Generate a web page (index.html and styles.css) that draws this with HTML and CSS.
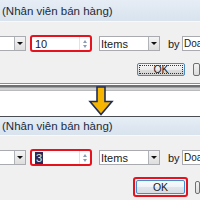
FILE: index.html
```html
<!DOCTYPE html>
<html>
<head>
<meta charset="utf-8">
<link rel="stylesheet" href="styles.css">
</head>
<body>
<div class="panel top">
  <div class="title">(Nhân viên bán hàng)</div>
  <div class="body">
    <div class="row">
      <div class="combo first"><span class="btn"><span class="tri"></span></span></div>
      <div class="spin hl"><span class="val">10</span><span class="arrows"><span class="up"></span><span class="down"></span></span></div>
      <div class="combo items"><span class="txt">Items</span><span class="btn"><span class="tri"></span></span></div>
      <span class="by">by</span>
      <div class="combo doan"><span class="txt">Doan</span></div>
    </div>
    <div class="btnrow">
      <div class="okwrap"><div class="ok focus">OK</div></div>
      <div class="ok other"></div>
    </div>
  </div>
</div>
<div class="sep">
  <div class="line blue"></div>
  <div class="line white1"></div>
  <div class="line dark"></div>
  <div class="line mid"></div>
  <div class="line light"></div>
  <div class="line mid2"></div>
  <div class="gap"></div>
  <div class="line dark2"></div>
  <svg class="arrow" width="26" height="30" viewBox="0 0 26 30">
    <path d="M9 1 H17 V15.5 H24 L13 28.5 L2 15.5 H9 Z" fill="#f6b500" stroke="#1f2d5a" stroke-width="1.6" stroke-linejoin="miter"/>
  </svg>
</div>
<div class="panel bottom">
  <div class="title">(Nhân viên bán hàng)</div>
  <div class="body">
    <div class="row">
      <div class="combo first"><span class="btn"><span class="tri"></span></span></div>
      <div class="spin hl"><span class="val"><span class="cur">3</span></span><span class="arrows"><span class="up"></span><span class="down"></span></span></div>
      <div class="combo items"><span class="txt">Items</span><span class="btn"><span class="tri"></span></span></div>
      <span class="by">by</span>
      <div class="combo doan"><span class="txt">Doan</span></div>
    </div>
    <div class="btnrow">
      <div class="okwrap red"><div class="ok">OK</div></div>
      <div class="ok other"></div>
    </div>
  </div>
</div>
</body>
</html>
```
FILE: styles.css
```css
* { box-sizing: border-box; }
html, body { margin: 0; padding: 0; }
body {
  width: 200px; height: 200px; overflow: hidden;
  font-family: "Liberation Sans", "DejaVu Sans", sans-serif;
  font-size: 11px; color: #1a1a1a; background: #fff;
}
.panel { background: #f0f0f0; overflow: hidden; position: relative; }
.top { height: 83px; }
.bottom { height: 83px; }
.title {
  height: 22px; line-height: 22px; padding-left: 2px;
  background: linear-gradient(#e6edf5, #d8e3ee);
  border-bottom: 1px solid #f7f9fb;
  color: #1e2b3a; white-space: nowrap; font-size: 11.5px;
}
.bottom .title { height: 19px; line-height: 18px; }
.body { padding-top: 13px; }
.bottom .body { padding-top: 13px; }
.row { display: flex; align-items: center; height: 17px; }
.row > * { flex-shrink: 0; }
.combo {
  height: 15px; background: #fff; border: 1px solid #a9abb0;
  display: flex; align-items: center; position: relative;
}
.combo.first { width: 27px; margin-left: -1px; border-left: none; justify-content: flex-end; }
.btn {
  width: 11px; height: 13px; border-left: 1px solid #b0b3b8;
  background: linear-gradient(#f4f4f4, #dedede);
  display: flex; align-items: center; justify-content: center;
}
.items .btn { position: absolute; right: 0; top: 0; }
.tri { width: 0; height: 0; border-left: 3px solid transparent; border-right: 3px solid transparent; border-top: 3px solid #111; }
.spin {
  margin-left: 4px; width: 62px; height: 17px;
  display: flex; align-items: center; justify-content: space-between;
  background: #fff;
}
.spin.hl { border: 2px solid #e5131d; border-radius: 3px; }
.val { padding-left: 3px; font-size: 11px; }
.cur { background: #2a2a5a; color: #e8e8d0; padding: 0 1px; }
.arrows { width: 10px; height: 13px; margin-right: 1px; display: flex; flex-direction: column; justify-content: center; gap: 2px; align-items: center; border-left: 1px solid #dfe3ea; }
.up { width: 0; height: 0; border-left: 2.5px solid transparent; border-right: 2.5px solid transparent; border-bottom: 3px solid #8a9cb6; }
.down { width: 0; height: 0; border-left: 2.5px solid transparent; border-right: 2.5px solid transparent; border-top: 3px solid #8a9cb6; }
.combo.items { margin-left: 7px; width: 61px; }
.txt { padding-left: 1px; font-size: 11px; }
.by { margin-left: 8px; width: 14px; font-size: 11px; }
.combo.doan { margin-left: 0; width: 30px; }
.doan .txt { font-size: 10px; padding-left: 1px; white-space: nowrap; }
.btnrow { display: flex; margin-top: 10px; padding-left: 136px; align-items: center; }
.bottom .btnrow { margin-top: 11px; padding-left: 133px; }
.okwrap { padding: 1px; }
.okwrap.red { border: 2px solid #e5131d; border-radius: 3px; padding: 1px; }
.ok {
  width: 48px; height: 13px; line-height: 11px; text-align: center;
  border: 1px solid #4a8ac0; border-radius: 2px;
  background: linear-gradient(#f6f6f6, #ececec 50%, #dddddd 51%, #d2d2d2);
  font-size: 10.5px;
}
.red .ok { width: 49px; height: 14px; line-height: 12px; border-color: #3c8fd0; background: linear-gradient(#f8fbfd, #eef3f7 50%, #e0e6ea 51%, #d7dde2); }
.ok.focus { outline: 1px dotted #333; outline-offset: -3px; }
.ok.other { margin-left: 7px; width: 30px; border-color: #707070; background: linear-gradient(#f2f2f2, #dcdcdc); }
.sep { height: 34px; position: relative; background: #fff; display: flex; flex-direction: column; }
.line { height: 1px; flex-shrink: 0; }
.line.blue { background: #5b9bd5; height: 1px; }
.line.white1 { background: #fff; }
.line.dark { background: #6d7071; height: 2px; }
.line.mid { background: #a0a2a4; }
.line.light { background: #d0d2d4; height: 2px; }
.line.mid2 { background: #b8babc; }
.gap { flex: 1; background: #fff; }
.line.dark2 { background: #4a4d52; }
.arrow { position: absolute; left: 88px; top: 3px; }
```
